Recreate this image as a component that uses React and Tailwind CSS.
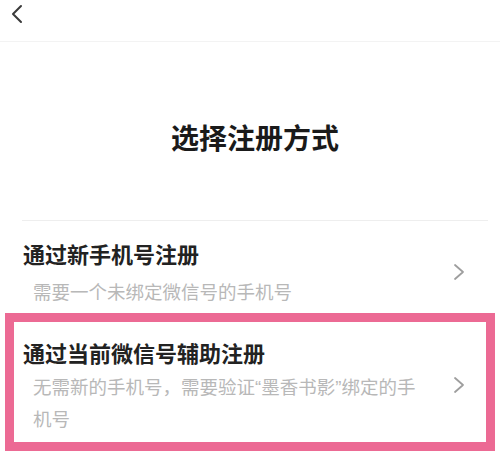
import React from "react";

const Chevron = () => (
  <svg width="12" height="18" viewBox="0 0 12 18" fill="none" className="shrink-0">
    <path d="M2 2 L10 9 L2 16" stroke="#9e9e9e" strokeWidth="1.8" strokeLinecap="round" strokeLinejoin="round" />
  </svg>
);

const Q = ({ c }) => <span className="font-['Liberation_Sans',sans-serif]">{c}</span>;

export default function App() {
  return (
    <div
      className="w-[500px] h-[454px] bg-white overflow-hidden flex flex-col relative"
      style={{ fontFamily: '"Noto Sans CJK SC", "Noto Sans", sans-serif' }}
    >
      <div className="h-[42px] shrink-0 border-b border-[#f3f3f3] flex items-start pl-[10px] pt-[4px]">
        <svg width="14" height="20" viewBox="0 0 14 20" fill="none">
          <path d="M11 2 L3 10 L11 18" stroke="#3a3a3a" strokeWidth="2" strokeLinecap="round" strokeLinejoin="round" />
        </svg>
      </div>

      <div className="mt-[75px] h-[40px] leading-[40px] text-center pl-[10px] text-[28px] font-bold text-[#1a1a1a]">
        选择注册方式
      </div>

      <div className="mt-[63px] ml-[22px] mr-[12px] h-px bg-[#eeeeee]" />

      <div className="flex items-center pl-[23px] pr-[35px] pt-[17px]">
        <div className="flex-1 flex flex-col">
          <div className="text-[22px] leading-[30px] font-semibold text-[#222222]">通过新手机号注册</div>
          <div className="mt-[8px] pl-[10px] text-[18.5px] leading-[30px] text-[#b8b8b8]">需要一个未绑定微信号的手机号</div>
        </div>
        <Chevron />
      </div>

      <div className="mt-[7px] mx-[5px] border-[9px] border-[#ec6a94] flex items-center pl-[9px] pr-[21px] pt-[15px] pb-[9px]">
        <div className="flex-1 flex flex-col">
          <div className="text-[22px] leading-[30px] font-semibold text-[#222222]">通过当前微信号辅助注册</div>
          <div className="mt-[4px] pl-[10px] w-[398px] text-[18.5px] leading-[30px] text-[#b8b8b8]">
            无需新的手机号，需要验证<Q c="“" />墨香书影<Q c="”" />绑定的手机号
          </div>
        </div>
        <Chevron />
      </div>
    </div>
  );
}
